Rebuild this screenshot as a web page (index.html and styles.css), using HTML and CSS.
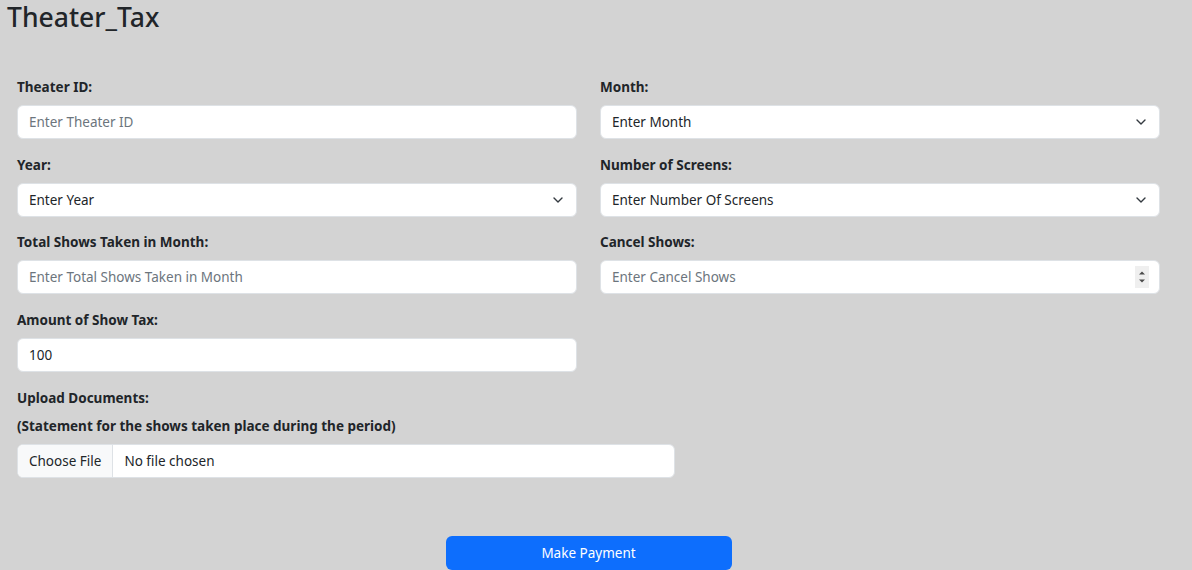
FILE: index.html
```html
<!DOCTYPE html>
<html lang="en">
<head>
<meta charset="utf-8">
<title>Theater_Tax</title>
<link rel="stylesheet" href="styles.css">
</head>
<body>
<h2 class="title">Theater_Tax</h2>
<form class="tax-form">
  <div class="grid">
    <div class="group">
      <label class="lbl">Theater ID:</label>
      <div class="field"><span class="ph">Enter Theater ID</span></div>
    </div>
    <div class="group">
      <label class="lbl">Month:</label>
      <div class="field select"><span class="val">Enter Month</span>
        <svg class="chev" width="10" height="6" viewBox="0 0 10 6"><path d="M1 1 5 5 9 1" fill="none" stroke="#343a40" stroke-width="1.4" stroke-linecap="round" stroke-linejoin="round"/></svg>
      </div>
    </div>
    <div class="group">
      <label class="lbl">Year:</label>
      <div class="field select"><span class="val">Enter Year</span>
        <svg class="chev" width="10" height="6" viewBox="0 0 10 6"><path d="M1 1 5 5 9 1" fill="none" stroke="#343a40" stroke-width="1.4" stroke-linecap="round" stroke-linejoin="round"/></svg>
      </div>
    </div>
    <div class="group">
      <label class="lbl">Number of Screens:</label>
      <div class="field select"><span class="val">Enter Number Of Screens</span>
        <svg class="chev" width="10" height="6" viewBox="0 0 10 6"><path d="M1 1 5 5 9 1" fill="none" stroke="#343a40" stroke-width="1.4" stroke-linecap="round" stroke-linejoin="round"/></svg>
      </div>
    </div>
    <div class="group">
      <label class="lbl">Total Shows Taken in Month:</label>
      <div class="field"><span class="ph">Enter Total Shows Taken in Month</span></div>
    </div>
    <div class="group">
      <label class="lbl">Cancel Shows:</label>
      <div class="field number"><span class="ph">Enter Cancel Shows</span>
        <span class="spin">
          <svg width="14" height="22" viewBox="0 0 14 22"><path d="M4 8.5 7 5.5 10 8.5Z" fill="#4a4a4a"/><path d="M4 13.5 7 16.5 10 13.5Z" fill="#4a4a4a"/></svg>
        </span>
      </div>
    </div>
    <div class="group">
      <label class="lbl">Amount of Show Tax:</label>
      <div class="field"><span class="val">100</span></div>
    </div>
  </div>
  <div class="upload">
    <label class="lbl">Upload Documents:</label>
    <label class="lbl">(Statement for the shows taken place during the period)</label>
    <div class="field file">
      <span class="file-btn">Choose File</span>
      <span class="file-name">No file chosen</span>
    </div>
  </div>
  <div class="actions">
    <button type="button" class="btn-pay">Make Payment</button>
  </div>
</form>
</body>
</html>
```

FILE: styles.css
```css
html, body {
  margin: 0;
  padding: 0;
  background: #d3d3d3;
  height: 100%;
  overflow: hidden;
}
body {
  font-family: "Noto Sans", "Open Sans", sans-serif;
  color: #212529;
  font-size: 14px;
}
.title {
  margin: 0;
  padding: 0 7px;
  font-size: 26.5px;
  font-weight: 500;
  line-height: 34px;
  color: #212529;
}
.tax-form {
  padding: 43px 32px 0 17px;
}
.grid {
  display: grid;
  grid-template-columns: 560px 560px;
  column-gap: 23px;
}
.group {
  display: flex;
  flex-direction: column;
  margin-bottom: 15.67px;
}
.lbl {
  display: block;
  font-weight: 700;
  font-size: 13.5px;
  line-height: 21px;
  margin-bottom: 7px;
}
.field {
  position: relative;
  box-sizing: border-box;
  height: 34px;
  background: #fff;
  border: 1px solid #dee2e6;
  border-radius: 6px;
  padding: 0 11px;
  display: flex;
  align-items: center;
  font-size: 13.5px;
}
.ph { color: #6c757d; }
.val { color: #212529; }
.chev {
  position: absolute;
  right: 13px;
  top: 13px;
}
.spin {
  position: absolute;
  right: 10px;
  top: 5px;
  width: 14px;
  height: 22px;
  background: #efefef;
  display: flex;
}
.upload {
  display: flex;
  flex-direction: column;
  width: 658px;
}
.file {
  padding: 0;
  overflow: hidden;
}
.file-btn {
  display: flex;
  align-items: center;
  height: 100%;
  padding: 0 11px;
  background: #f8f9fa;
  border-right: 1px solid #dee2e6;
}
.file-name {
  padding: 0 11px;
}
.actions {
  display: flex;
  justify-content: center;
  padding-top: 58.3px;
  width: 1143px;
}
.btn-pay {
  width: 286px;
  height: 34px;
  border: none;
  border-radius: 6px;
  background: #0d6efd;
  color: #fff;
  font-family: "Noto Sans", "Open Sans", sans-serif;
  font-size: 13.5px;
  padding: 0;
}
```
